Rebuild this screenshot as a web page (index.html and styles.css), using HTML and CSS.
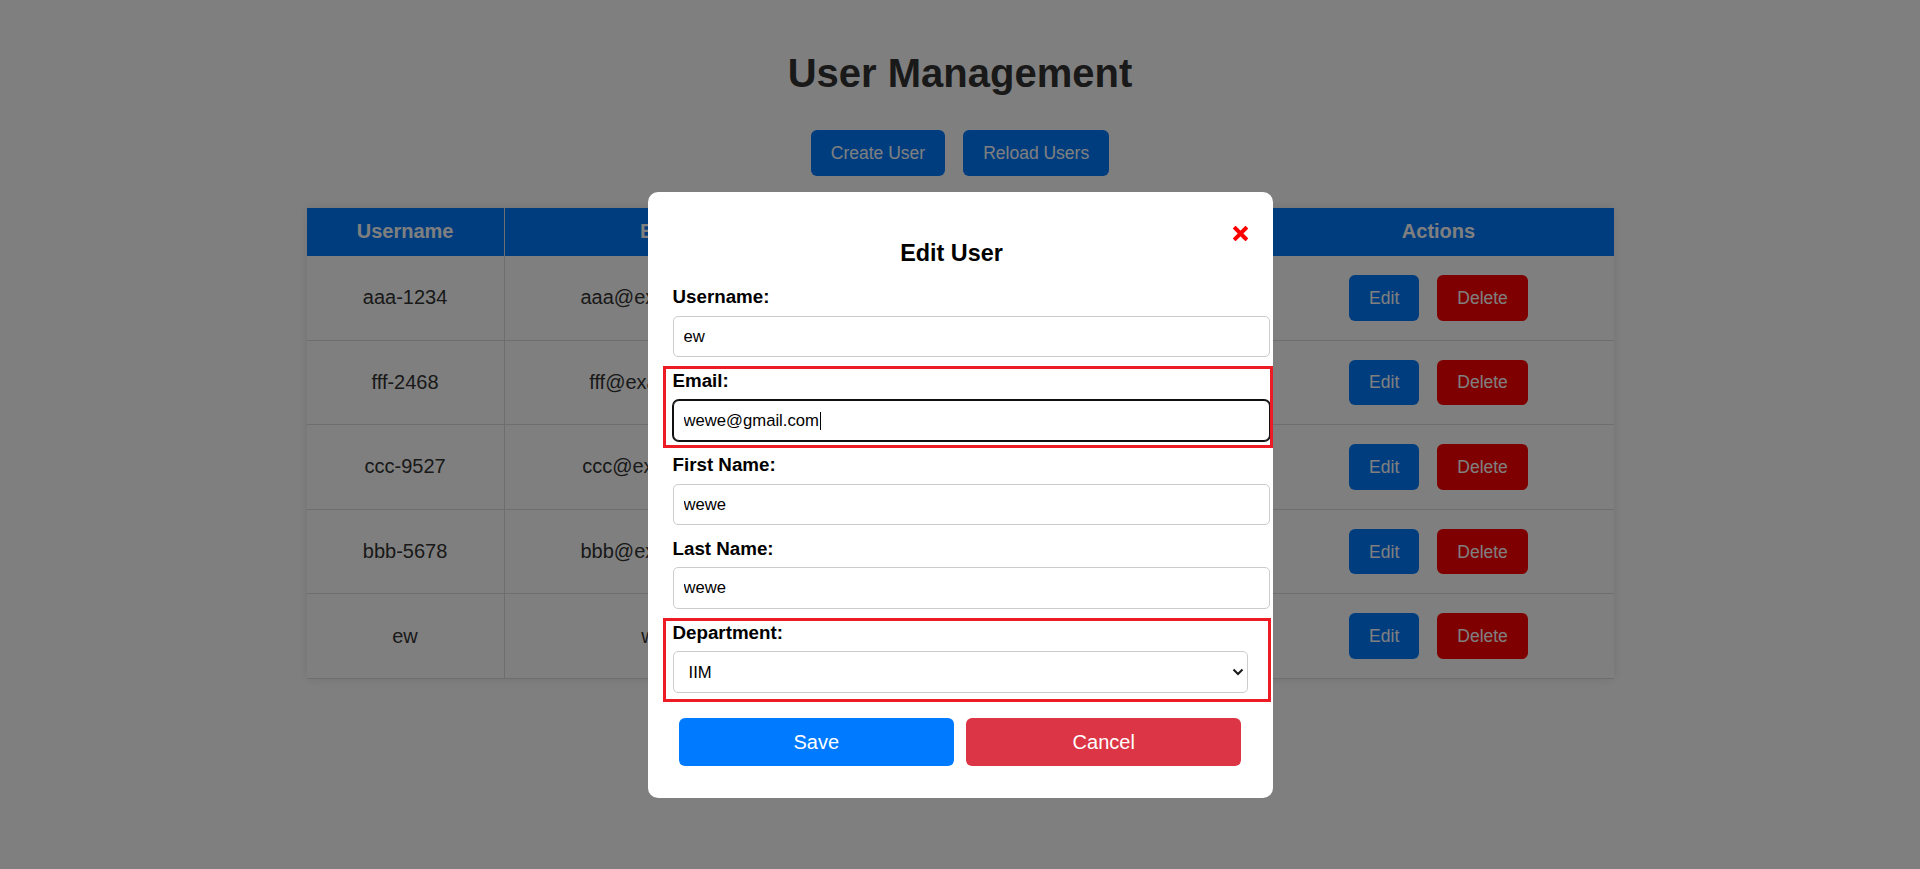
FILE: index.html
```html
<!DOCTYPE html>
<html lang="en">
<head>
<meta charset="utf-8">
<title>User Management</title>
<link rel="stylesheet" href="styles.css">
</head>
<body>
<div class="page">
  <h1 class="page-title">User Management</h1>
  <div class="toolbar">
    <button class="btn btn-primary" type="button">Create User</button>
    <button class="btn btn-primary" type="button">Reload Users</button>
  </div>
  <table class="user-table">
    <colgroup>
      <col class="col-username">
      <col class="col-email">
      <col class="col-first">
      <col class="col-last">
      <col class="col-dept">
      <col class="col-actions">
    </colgroup>
    <thead>
      <tr><th>Username</th><th>Email</th><th>First Name</th><th>Last Name</th><th>Department</th><th>Actions</th></tr>
    </thead>
    <tbody>
      <tr><td>aaa-1234</td><td>aaa@example.com</td><td>Aaa</td><td>Aaa</td><td>IIM</td>
        <td><div class="row-actions"><button class="btn btn-primary" type="button">Edit</button><button class="btn btn-danger" type="button">Delete</button></div></td></tr>
      <tr><td>fff-2468</td><td>fff@example.com</td><td>Fff</td><td>Fff</td><td>IIM</td>
        <td><div class="row-actions"><button class="btn btn-primary" type="button">Edit</button><button class="btn btn-danger" type="button">Delete</button></div></td></tr>
      <tr><td>ccc-9527</td><td>ccc@example.com</td><td>Ccc</td><td>Ccc</td><td>IIM</td>
        <td><div class="row-actions"><button class="btn btn-primary" type="button">Edit</button><button class="btn btn-danger" type="button">Delete</button></div></td></tr>
      <tr><td>bbb-5678</td><td>bbb@example.com</td><td>Bbb</td><td>Bbb</td><td>IIM</td>
        <td><div class="row-actions"><button class="btn btn-primary" type="button">Edit</button><button class="btn btn-danger" type="button">Delete</button></div></td></tr>
      <tr><td>ew</td><td>wewe</td><td>wewe</td><td>wewe</td><td>IIM</td>
        <td><div class="row-actions"><button class="btn btn-primary" type="button">Edit</button><button class="btn btn-danger" type="button">Delete</button></div></td></tr>
    </tbody>
  </table>
</div>

<div class="overlay">
  <div class="modal">
    <span class="modal-close" aria-label="Close">
      <svg width="15" height="15" viewBox="0 0 15 15"><path d="M2.5 2.5 L12.5 12.5 M12.5 2.5 L2.5 12.5" stroke="#ff0000" stroke-width="4" stroke-linecap="square" fill="none"/></svg>
    </span>
    <h3 class="modal-title">Edit User</h3>
    <form class="modal-form">
      <div class="field">
        <label class="field-label" for="f-username">Username:</label>
        <input class="field-input" id="f-username" type="text" value="ew">
      </div>
      <div class="field mark-email">
        <label class="field-label" for="f-email">Email:</label>
        <div class="input-wrap">
          <input class="field-input is-focused" id="f-email" type="text" value="wewe@gmail.com">
          <span class="caret"></span>
        </div>
      </div>
      <div class="field">
        <label class="field-label" for="f-first">First Name:</label>
        <input class="field-input" id="f-first" type="text" value="wewe">
      </div>
      <div class="field">
        <label class="field-label" for="f-last">Last Name:</label>
        <input class="field-input" id="f-last" type="text" value="wewe">
      </div>
      <div class="field mark-dept">
        <label class="field-label" for="f-dept">Department:</label>
        <div class="select-wrap">
          <select class="field-select" id="f-dept"><option>IIM</option></select>
          <svg class="select-arrow" width="12" height="8" viewBox="0 0 12 8"><path d="M1.5 1.5 L6 6 L10.5 1.5" stroke="#1a1a1a" stroke-width="2" fill="none"/></svg>
        </div>
      </div>
      <div class="modal-actions">
        <button class="modal-btn modal-btn-save" type="button">Save</button>
        <button class="modal-btn modal-btn-cancel" type="button">Cancel</button>
      </div>
    </form>
  </div>
</div>
</body>
</html>
```

FILE: styles.css
```css
html, body {
  margin: 0;
  padding: 0;
}

body {
  font-family: "Liberation Sans", Arial, sans-serif;
  background: #ffffff;
  color: #333333;
}

.page {
  padding: 25px;
}

.page-title {
  margin: 25.4px 0 33.6px;
  font-size: 40px;
  line-height: 46px;
  font-weight: bold;
  text-align: center;
  color: #333333;
}

.toolbar {
  display: flex;
  justify-content: center;
  gap: 18px;
  margin-bottom: 31.7px;
}

.btn {
  font-family: "Liberation Sans", Arial, sans-serif;
  font-size: 17.5px;
  line-height: 20px;
  padding: 13px 20px;
  border: none;
  border-radius: 6px;
  color: #ffffff;
  cursor: pointer;
}

.btn-primary {
  background: #007bff;
}

.btn-danger {
  background: #ff0000;
}

.user-table {
  width: 1307px;
  margin: 0 auto;
  border-collapse: collapse;
  table-layout: fixed;
  background: #ffffff;
  box-shadow: 0 0 10px rgba(0, 0, 0, 0.1);
}

.col-username { width: 197.6px; }
.col-email { width: 325.4px; }
.col-first { width: 144.5px; }
.col-last { width: 144.5px; }
.col-dept { width: 144.5px; }
.col-actions { width: 350.5px; }

.user-table th {
  background: #007bff;
  color: #ffffff;
  font-size: 20px;
  font-weight: bold;
  line-height: 23px;
  padding: 12.8px 10px 12.5px;
  border-right: 1px solid #dddddd;
  text-align: center;
}

.user-table td {
  font-size: 20px;
  line-height: 23px;
  padding: 19px 10px;
  border-bottom: 1px solid #dddddd;
  border-right: 1px solid #dddddd;
  text-align: center;
  vertical-align: middle;
  color: #333333;
  white-space: nowrap;
  overflow: hidden;
}

.user-table th:last-child,
.user-table td:last-child {
  border-right: none;
}

.row-actions {
  display: flex;
  justify-content: center;
  gap: 18px;
}

.row-actions .btn {
  padding: 12.8px 20px;
}

/* Modal */
.overlay {
  position: fixed;
  inset: 0;
  background: rgba(0, 0, 0, 0.5);
}

.modal {
  box-sizing: border-box;
  width: 625px;
  margin: 192px auto 0;
  padding: 25px;
  background: #ffffff;
  border-radius: 10px;
  color: #000000;
}

.modal-close {
  float: right;
  box-sizing: border-box;
  width: 17px;
  height: 28.75px;
  padding-top: 9px;
  display: flex;
  justify-content: flex-end;
  align-items: flex-start;
  cursor: pointer;
}

.modal-close svg {
  display: block;
}

.modal-title {
  margin: 23.4px 0 19.1px;
  font-size: 23.4px;
  line-height: 27px;
  font-weight: bold;
  text-align: center;
}

.modal-form {
  margin: 0;
}

.field {
  position: relative;
  margin-bottom: 13px;
}

.field-label {
  display: block;
  font-size: 18.75px;
  line-height: 21.6px;
  font-weight: bold;
  margin-bottom: 8px;
}

.field-input {
  display: block;
  width: 100%;
  padding: 10px;
  border: 1px solid #cccccc;
  border-radius: 5px;
  font-family: "Liberation Sans", Arial, sans-serif;
  font-size: 16.67px;
  line-height: 19.2px;
  color: #000000;
  background: #ffffff;
  outline: none;
}

.field-input.is-focused {
  border-color: #101010;
  box-shadow: 0 0 0 1px #101010;
  border-radius: 6px;
}

.input-wrap {
  position: relative;
}

.caret {
  position: absolute;
  left: 147px;
  top: 12px;
  width: 1px;
  height: 18px;
  background: #000000;
}

.select-wrap {
  position: relative;
}

.field-select {
  display: block;
  box-sizing: border-box;
  width: 100%;
  height: 42px;
  padding: 0 15px;
  border: 1px solid #cccccc;
  border-radius: 5px;
  background: #ffffff;
  font-family: "Liberation Sans", Arial, sans-serif;
  font-size: 16.67px;
  color: #000000;
  -webkit-appearance: none;
  appearance: none;
}

.select-arrow {
  position: absolute;
  right: 4px;
  top: 17px;
  pointer-events: none;
}

/* Review annotation boxes drawn over the form */
.mark-email::after,
.mark-dept::after {
  content: "";
  position: absolute;
  border: 3px solid #ed1c24;
  pointer-events: none;
}

.mark-email::after {
  left: -9.6px;
  right: -25.7px;
  top: -4.3px;
  bottom: -7px;
}

.mark-dept::after {
  left: -9.6px;
  right: -23.6px;
  top: -3.8px;
  bottom: -9.2px;
}

.modal-actions {
  display: flex;
  margin-top: 19px;
}

.modal-btn {
  flex: 1;
  margin: 6.25px;
  padding: 12.5px;
  border: none;
  border-radius: 6px;
  font-family: "Liberation Sans", Arial, sans-serif;
  font-size: 20px;
  line-height: 23px;
  color: #ffffff;
  cursor: pointer;
}

.modal-btn-save {
  background: #007bff;
}

.modal-btn-cancel {
  background: #dc3545;
}
```
